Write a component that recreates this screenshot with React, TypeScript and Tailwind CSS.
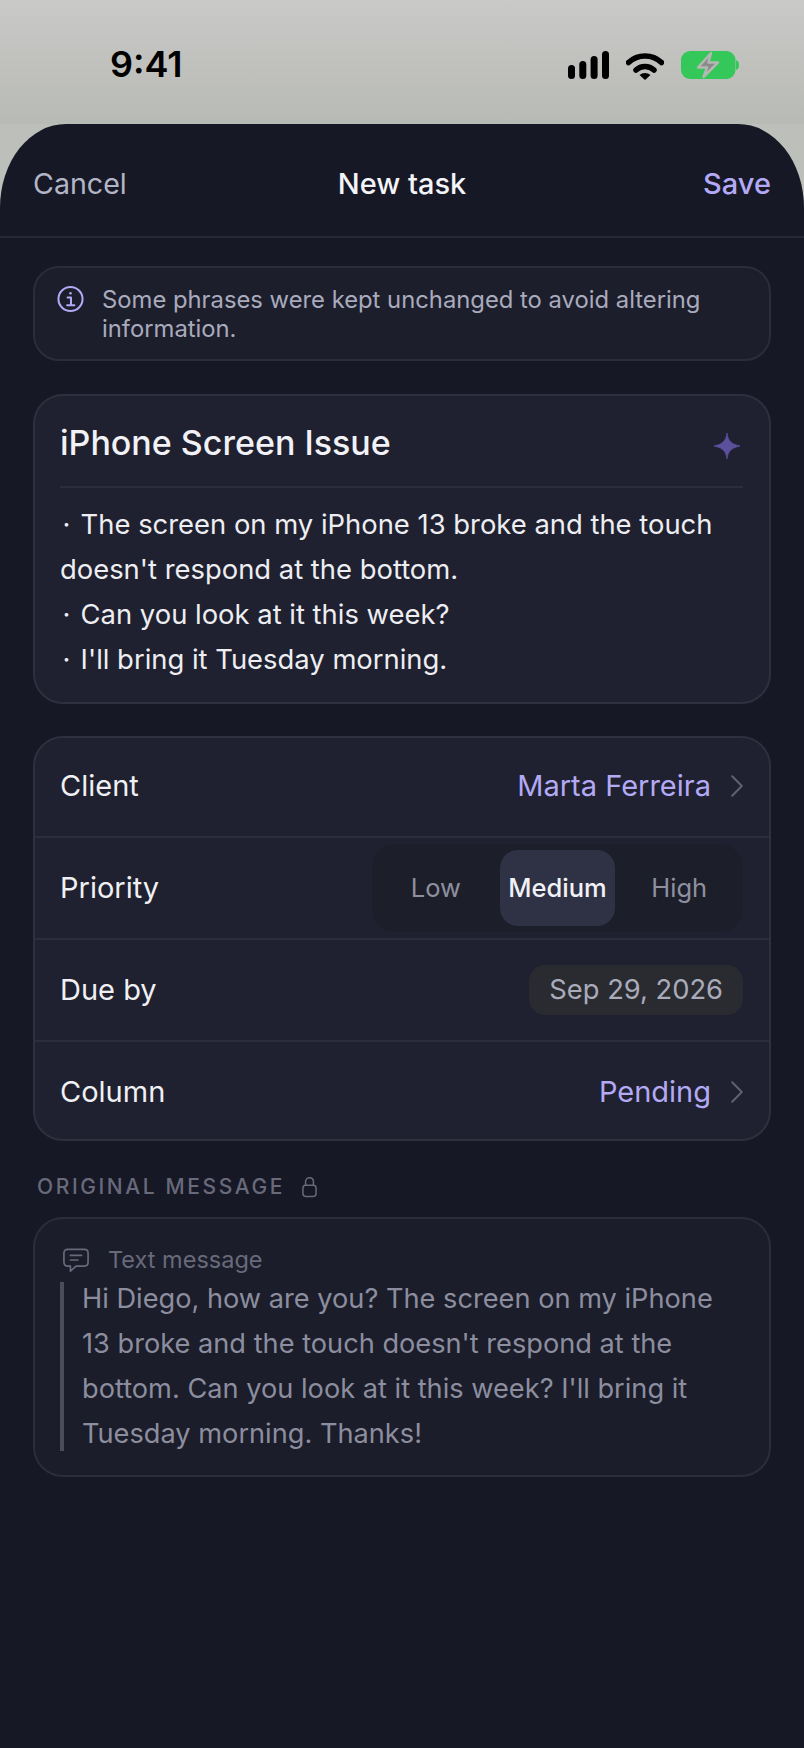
const FONT = "font-['Inter',sans-serif]";

function SignalIcon() {
  return (
    <svg width="41" height="28" viewBox="0 0 41 28" fill="#000">
      <rect x="0" y="14" width="7" height="14" rx="3.5" />
      <rect x="11.3" y="10" width="7" height="18" rx="3.5" />
      <rect x="22.6" y="5" width="7" height="23" rx="3.5" />
      <rect x="34" y="0" width="7" height="28" rx="3.5" />
    </svg>
  );
}

function WifiIcon() {
  return (
    <svg width="38" height="29" viewBox="0 0 38 29" fill="none" stroke="#000" strokeWidth="5.5">
      <path d="M2.5 11.5 A24 24 0 0 1 35.5 11.5" strokeLinecap="round" />
      <path d="M10 19 A13 13 0 0 1 28 19" strokeLinecap="round" />
      <path d="M13.5 24 L19 29 L24.5 24 A8.5 8.5 0 0 0 13.5 24 Z" fill="#000" stroke="none" />
    </svg>
  );
}

function BatteryIcon() {
  return (
    <svg width="58" height="30" viewBox="0 0 58 30">
      <rect x="0" y="1" width="54.5" height="28" rx="9" fill="#34c759" />
      <path d="M55 10 C57 10.5 58 12.5 58 15 C58 17.5 57 19.5 55 20 Z" fill="#34c759" />
      <path d="M30 3 L17 17.5 H26 L22.5 27 L37 12.5 H27.5 Z" fill="#8a8c8a" stroke="#b4b8b2" strokeWidth="2.5" strokeLinejoin="round" />
    </svg>
  );
}

function InfoIcon() {
  return (
    <svg width="27" height="28" viewBox="0 0 28 28" fill="none" stroke="#b4a9f5" strokeWidth="2.1">
      <circle cx="14" cy="14" r="12.5" />
      <path d="M11 12.5 H14.5 V20 M10.5 20.5 H18" strokeLinecap="round" strokeLinejoin="round" />
      <circle cx="14" cy="8" r="1.3" fill="#b4a9f5" stroke="none" />
    </svg>
  );
}

function SparkleIcon() {
  return (
    <svg width="26" height="26" viewBox="0 0 26 26" fill="#5c4f9c">
      <path d="M13 0 C13.8 6 15.5 11 26 13 C15.5 15 13.8 20 13 26 C12.2 20 10.5 15 0 13 C10.5 11 12.2 6 13 0 Z" stroke="#5c4f9c" strokeWidth="0.8" />
    </svg>
  );
}

function Chevron() {
  return (
    <svg width="12" height="22" viewBox="0 0 12 22" fill="none" stroke="#5f616d" strokeWidth="2">
      <path d="M1.2 1.2 L10.8 11 L1.2 20.8" strokeLinecap="round" strokeLinejoin="round" />
    </svg>
  );
}

function LockIcon() {
  return (
    <svg width="15" height="22" viewBox="0 0 16 22" fill="none" stroke="#686a7b" strokeWidth="1.6">
      <rect x="1" y="9" width="14" height="12" rx="3" />
      <path d="M3.8 9 V5.5 C3.8 -0.5 12.2 -0.5 12.2 5.5 V9" />
    </svg>
  );
}

function MessageIcon() {
  return (
    <svg width="26" height="25" viewBox="0 0 28 26" fill="none" stroke="#686a7b" strokeWidth="1.8">
      <path d="M5 1 H23 C25.5 1 27 2.5 27 5 V15 C27 17.5 25.5 19 23 19 H14 L8 24.5 V19 H5 C2.5 19 1 17.5 1 15 V5 C1 2.5 2.5 1 5 1 Z" strokeLinejoin="round" />
      <path d="M8 7.5 H20 M8 12.5 H16" strokeLinecap="round" />
    </svg>
  );
}

function StatusBar() {
  return (
    <div className="h-[124px] bg-gradient-to-b from-[#c9c9c7] to-[#b8bab5] flex items-start justify-between pt-[44px] pl-[110px] pr-[65px]">
      <span className="text-[36px] leading-[40px] font-semibold text-black">9:41</span>
      <div className="flex items-center gap-[17px] mt-[6px]">
        <SignalIcon />
        <WifiIcon />
        <BatteryIcon />
      </div>
    </div>
  );
}

function Row(props: { label: string; children: React.ReactNode; height: string; border?: boolean; extra?: string }) {
  return (
    <div className={`flex items-center justify-between pl-[25px] pr-[26px] ${props.height} ${props.extra ?? ''} ${props.border ? 'border-b-2 border-[#2b2d3a]' : ''}`}>
      <span className="text-[29px] text-[#f0f0f4]">{props.label}</span>
      {props.children}
    </div>
  );
}

function LinkValue({ value }: { value: string }) {
  return (
    <div className="flex items-center gap-[20px]">
      <span className="text-[29px] text-[#b4a9f5]">{value}</span>
      <Chevron />
    </div>
  );
}

export default function App() {
  return (
    <div className={`${FONT} w-[804px] h-[1748px] overflow-hidden bg-[#bdbfba]`}>
      <StatusBar />
      <div className="h-[1624px] bg-[#161825] rounded-tl-[66px_84px] rounded-tr-[66px_84px]">
        <div className="h-[114px] grid grid-cols-[1fr_auto_1fr] items-center px-[33px] pt-[8px] border-b-2 border-[#262836]">
          <span className="text-[28.6px] text-[#b3b5c6]">Cancel</span>
          <span className="text-[29px] font-[450] text-[#f4f4f8]">New task</span>
          <span className="text-[29px] font-[450] text-[#b4a9f5] text-right">Save</span>
        </div>

        <div className="px-[33px] pt-[28px] flex flex-col">
          <div className="h-[95px] rounded-[26px] border-2 border-[#2b2d3a] bg-[#1c1e2c] flex gap-[18px] pl-[22px] pr-[20px] pt-[17px]">
            <div className="shrink-0"><InfoIcon /></div>
            <p className="text-[23.8px] leading-[29px] text-[#a9abbd]">
              Some phrases were kept unchanged to avoid altering information.
            </p>
          </div>

          <div className="h-[310px] mt-[33px] rounded-[30px] border-2 border-[#2e303d] bg-[#1f2130] pl-[25px] pr-[26px]">
            <div className="h-[92px] flex items-center justify-between border-b-2 border-[#2b2d3a] pt-[2px]">
              <span className="text-[34px] font-[450] text-[#f2f2f6]">iPhone Screen Issue</span>
              <div className="mr-[3px] mt-[8px]"><SparkleIcon /></div>
            </div>
            <div className="pt-[14px] text-[27.4px] leading-[45px] text-[#eeeef2]">
              <p>{'\u200a· \u200a'}The screen on my iPhone 13 broke and the touch doesn't respond at the bottom.</p>
              <p>{'\u200a· \u200a'}Can you look at it this week?</p>
              <p>{'\u200a· \u200a'}I'll bring it Tuesday morning.</p>
            </div>
          </div>

          <div className="h-[405px] mt-[32px] rounded-[30px] border-2 border-[#2e303d] bg-[#1f2130] flex flex-col">
            <Row label="Client" height="h-[100px]" extra="pb-[2px]" border>
              <LinkValue value="Marta Ferreira" />
            </Row>
            <Row label="Priority" height="h-[102px]" border>
              <div className="w-[371px] h-[88px] rounded-[24px] bg-[#1c1e2a] flex items-center gap-[6px] px-[6px]">
                <span className="w-[116px] text-center text-[25.5px] text-[#8e909f]">Low</span>
                <span className="w-[116px] h-[76px] rounded-[18px] bg-[#2f3145] flex items-center justify-center text-[25.5px] font-[450] text-[#f2f2f6]">Medium</span>
                <span className="w-[116px] text-center text-[25.5px] text-[#8e909f]">High</span>
              </div>
            </Row>
            <Row label="Due by" height="h-[102px]" border>
              <span className="h-[50px] px-[20px] rounded-[16px] bg-[#2a2b30] flex items-center text-[27.3px] text-[#a9abbb]">Sep 29, 2026</span>
            </Row>
            <Row label="Column" height="h-[97px]" extra="pt-[3px]">
              <LinkValue value="Pending" />
            </Row>
          </div>

          <div className="mt-[31px] h-[30px] pl-[4px] flex items-center gap-[17px]">
            <span className="text-[21px] font-medium tracking-[2.6px] text-[#686a7b]">ORIGINAL MESSAGE</span>
            <LockIcon />
          </div>

          <div className="h-[260px] mt-[15px] rounded-[30px] border-2 border-[#2b2d3a] bg-[#1b1d2a] pl-[25px] pr-[27px] pt-[27px]">
            <div className="h-[28px] flex items-center gap-[19px] pl-[3px]">
              <MessageIcon />
              <span className="text-[23.5px] text-[#686a7b]">Text message</span>
            </div>
            <div className="mt-[8px] h-[169px] flow-root border-l-4 border-[#4b4d5a] pl-[18px]">
              <p className="-mt-[6px] text-[27.2px] leading-[45px] text-[#8c8e9f]">
                Hi Diego, how are you? The screen on my iPhone 13 broke and the touch doesn't respond at the bottom. Can you look at it this week? I'll bring it Tuesday morning. Thanks!
              </p>
            </div>
          </div>
        </div>
      </div>
    </div>
  );
}
